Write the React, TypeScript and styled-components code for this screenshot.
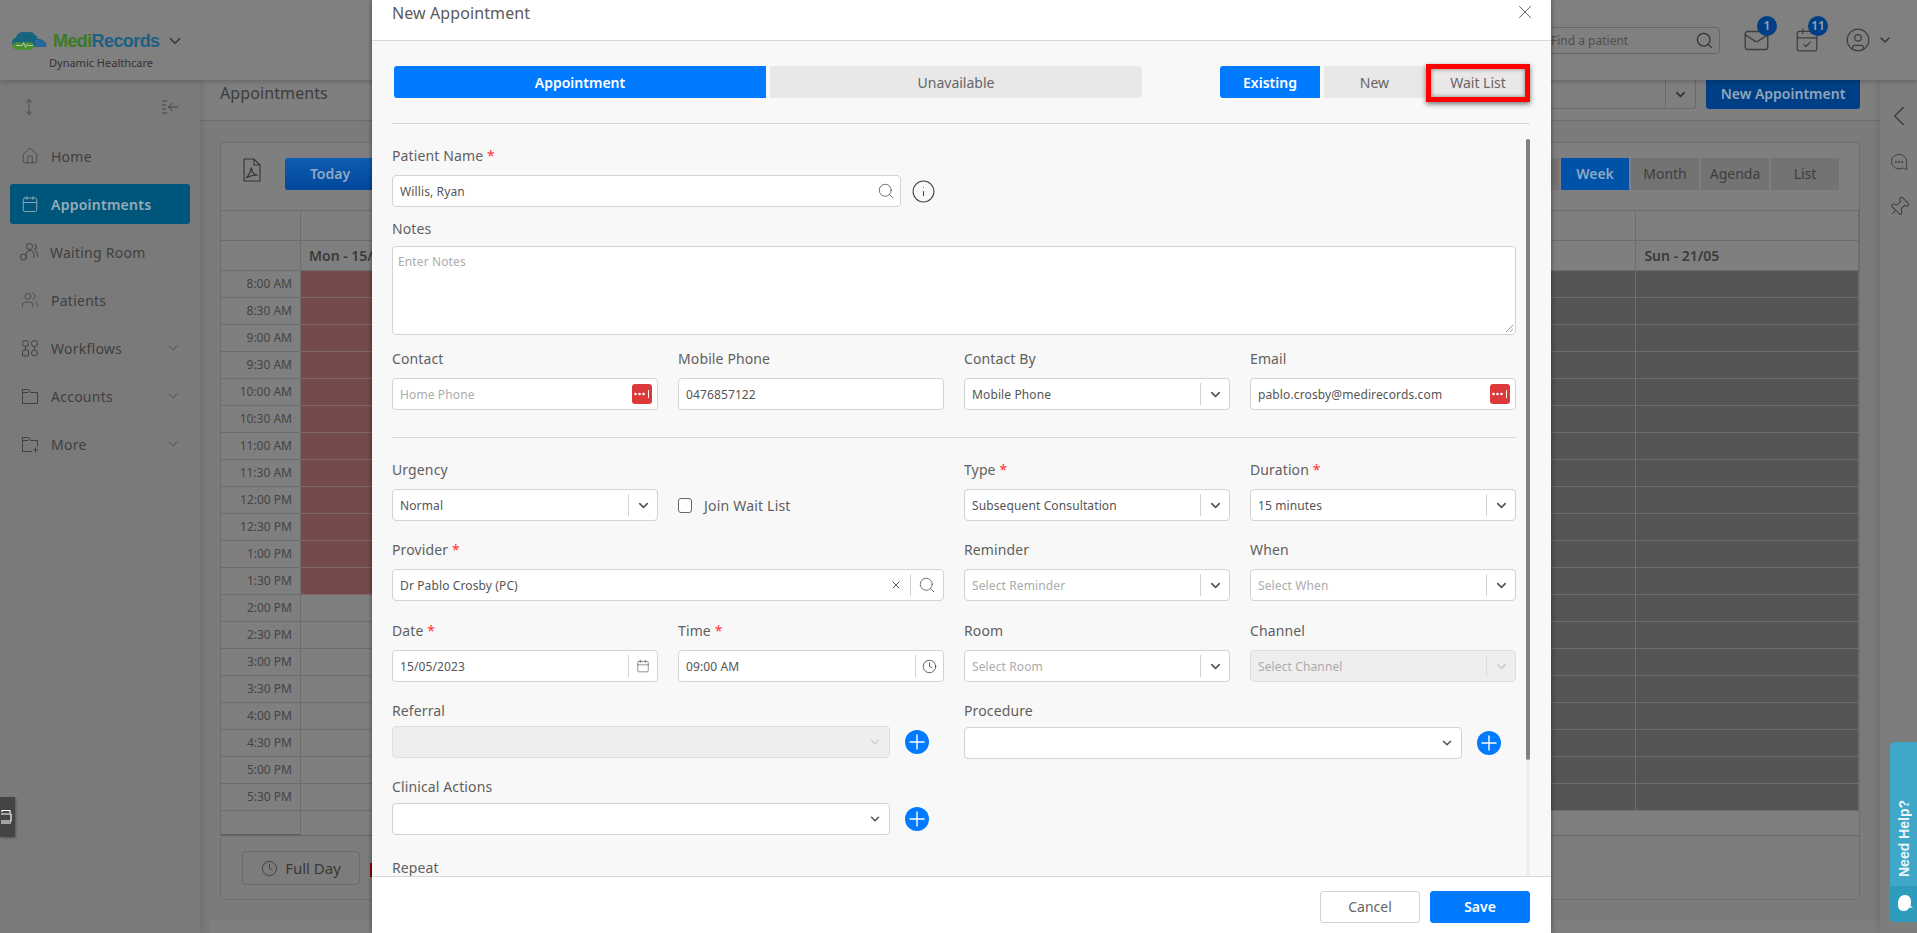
import React from "react";
import styled, { createGlobalStyle } from "styled-components";
import {
  Calendar, CalendarCheck, ChevronDown, ChevronLeft, CircleUser, Clock,
  House, Info, Mail, MoveVertical, Pin, Plus, Search, Users, X,
} from "lucide-react";

const Global = createGlobalStyle`
  html, body { margin: 0; padding: 0; height: 100%; overflow: hidden; }
  body { font-family: "Noto Sans", "Open Sans", sans-serif; background: #7b7b7b; }
  * { box-sizing: border-box; }
`;

const Page = styled.div`
  position: relative; width: 1917px; height: 933px; overflow: hidden;
  display: flex; flex-direction: column;
`;
const TopBar = styled.header`
  height: 80px; flex: none; position: relative; z-index: 2;
  display: flex; align-items: center; background: #808080;
  box-shadow: 0 2px 5px rgba(0,0,0,.18); padding-right: 24px;
`;
const Brand = styled.div`
  width: 200px; height: 80px; flex: none; padding: 29px 0 0 11px; position: relative;
`;
const BrandRow = styled.div` display: flex; align-items: center; gap: 6px; height: 24px; `;
const BrandName = styled.span`
  font: 700 18px/24px "Liberation Sans", Arial, sans-serif; letter-spacing: -.6px; color: #1c5f83;
  & b { color: #3c7a25; font-weight: 700; }
`;
const BrandSub = styled.div`
  font-size: 11px; line-height: 16px; color: #333; margin: 2px 0 0 38px; white-space: nowrap;
`;
const Chevron = styled(ChevronDown)` margin-left: 1px; color: #333; `;
const TopRight = styled.div` margin-left: auto; display: flex; align-items: center; `;
const SearchBox = styled.div`
  width: 240px; height: 27px; border: 1px solid #666; border-radius: 4px; display: flex; align-items: center;
  justify-content: space-between; padding: 0 5px 0 70px; font-size: 12px; color: #4e4e4e; margin-right: 23px;
`;
const IconBadge = styled.div`
  position: relative; width: 26px; height: 26px; margin-right: 25px; color: #3e3e3e;
`;
const Badge = styled.span`
  position: absolute; left: 14px; top: -11px; width: 20px; height: 20px; border-radius: 50%;
  background: #003f86; color: #93a5b8; font-size: 12px; font-weight: 600; line-height: 20px; text-align: center;
`;
const Body = styled.div` flex: 1; display: flex; min-height: 0; `;
const Sidebar = styled.aside`
  width: 200px; flex: none; background: #7a7a7a; padding: 27px 10px 0; box-shadow: 2px 0 6px rgba(0,0,0,.1); z-index: 1;
`;
const SideTools = styled.div`
  display: flex; justify-content: space-between; align-items: center; color: #444; height: 0; padding: 0 11px 0 10px; margin-bottom: 29px;
`;
const SideItem = styled.div<{ $active?: boolean }>`
  height: 40px; margin-bottom: 8px; border-radius: 3px; display: flex; align-items: center; gap: 12px; padding-left: 11px;
  font-size: 14px; letter-spacing: .25px; color: ${p => (p.$active ? "#96adb9" : "#404040")};
  font-weight: ${p => (p.$active ? 600 : 400)};
  background: ${p => (p.$active ? "#00567a" : "transparent")};
  & > svg:last-child:not(:first-child) { margin-left: auto; margin-right: 9px; }
`;
const Main = styled.main` flex: 1; min-width: 0; display: flex; flex-direction: column; `;
const PageHead = styled.div`
  height: 41px; flex: none; display: flex; background: #7f7f7f; border-bottom: 1px solid #6d6d6d; padding: 0 20px;
`;
const PageTitle = styled.h1`
  margin: 0; font-size: 16px; font-weight: 400; line-height: 26px; color: #3c3c3c; letter-spacing: .1px;
`;
const HeadSelect = styled.div`
  margin-left: auto; width: 196px; height: 29px; border: 1px solid #6a6a6a; border-top: 0; border-radius: 0 0 4px 4px;
  display: flex; justify-content: flex-end; align-items: center; color: #333;
`;
const HeadSelectArrow = styled.div`
  width: 30px; height: 100%; border-left: 1px solid #6a6a6a; display: flex; align-items: center; justify-content: center;
`;
const NewBtn = styled.div`
  margin-left: 10px; width: 154px; height: 29px; background: #003f85; color: #8fa6bd; border-radius: 0 0 3px 3px;
  font-size: 14px; font-weight: 600; line-height: 27px; text-align: center;
`;
const Rail = styled.aside`
  width: 37px; flex: none; background: #7d7d7d; box-shadow: -2px 0 6px rgba(0,0,0,.1); display: flex; flex-direction: column;
  align-items: center; padding-top: 19px; color: #3e3e3e;
  & > svg:nth-child(2) { margin-top: 20px; }
  & > svg:nth-child(3) { margin-top: 25px; }
`;
const Card = styled.section`
  margin: 21px 20px 0; height: 758px; flex: none; border: 1px solid #6d6d6d; border-radius: 4px; background: #7f7f7f; display: flex; flex-direction: column; overflow: hidden;
`;
const CalTools = styled.div`
  height: 68px; flex: none; display: flex; align-items: flex-start; padding: 15px 20px 0 22px; border-bottom: 1px solid #6d6d6d; color: #333;
`;
const Today = styled.div`
  width: 90px; height: 32px; margin-left: 24px; border-radius: 3px; background: linear-gradient(#0f5cb3, #00479a);
  color: #90a9c4; font-size: 14px; font-weight: 600; line-height: 32px; text-align: center;
`;
const ViewGroup = styled.div` margin-left: auto; display: flex; gap: 2px; `;
const ViewBtn = styled.div<{ $on?: boolean }>`
  width: 68px; height: 32px; font-size: 14px; line-height: 32px; text-align: center;
  font-weight: ${p => (p.$on ? 600 : 400)};
  background: ${p => (p.$on ? "#0052a8" : "#737373")};
  color: ${p => (p.$on ? "#8fa8c2" : "#3e3e3e")};
`;
const Grid = styled.div`
  display: grid; grid-template-columns: 80px repeat(7, 1fr); grid-template-rows: 30px 30px repeat(20, 27px); flex: none;
`;
const HeadCell = styled.div`
  border-right: 1px solid #6d6d6d; border-bottom: 1px solid #6d6d6d; padding-left: 8px;
  font-size: 14px; font-weight: 600; line-height: 29px; color: #3a3a3a;
`;
const TimeCell = styled.div`
  border-right: 1px solid #6d6d6d; border-bottom: 1px solid #6d6d6d; text-align: right; padding-right: 8px;
  font-size: 12px; line-height: 25px; color: #444;
`;
const SlotCell = styled.div<{ $kind: "busy" | "off" | "free" }>`
  border-right: 1px solid ${p => (p.$kind === "off" ? "#6e6e6e" : "#6d6d6d")};
  border-bottom: 1px solid ${p => (p.$kind === "busy" ? "#806868" : p.$kind === "off" ? "#6e6e6e" : "#6d6d6d")};
  background: ${p => (p.$kind === "busy" ? "#744a4a" : p.$kind === "off" ? "#555555" : "#7f7f7f")};
`;
const GridTail = styled.div`
  height: 24px; flex: none; position: relative; display: grid; grid-template-columns: 80px 1fr;
`;
const TailTime = styled.div` border-right: 1px solid #6d6d6d; border-bottom: 1px solid #606060; `;
const CalFoot = styled.div`
  flex: 1; border-top: 1px solid #666; background: #7c7c7c; display: flex; align-items: flex-start; padding: 15px 21px; gap: 10px;
`;
const FullDay = styled.div`
  width: 118px; height: 34px; border: 1px solid #6a6a6a; border-radius: 4px; display: flex; align-items: center; justify-content: center; gap: 7px;
  font-size: 15px; color: #383838;
`;
const LegendSwatch = styled.span` width: 14px; height: 14px; margin-top: 12px; background: #8b0000; `;
const PageFoot = styled.div` flex: 1; margin-left: 10px; margin-top: 20px; background: #7e7e7e; `;

const DeviceTab = styled.div`
  position: absolute; left: 0; top: 797px; width: 15px; height: 40px; background: #444; color: #fff; z-index: 3;
  box-shadow: 1px 1px 2px rgba(0,0,0,.3); display: flex; align-items: center; justify-content: flex-end;
`;
const Help = styled.div`
  position: absolute; left: 1890px; top: 742px; width: 27px; height: 180px; border-radius: 5px 0 0 5px; overflow: hidden; z-index: 3;
  display: flex; flex-direction: column; background: #3fa8c8;
`;
const HelpText = styled.div`
  flex: 1; display: flex; flex-direction: column; justify-content: flex-end; align-items: center; padding-bottom: 9px;
  font: 700 14px/16px "Liberation Sans", Arial, sans-serif; color: #e9f6fa; 
  & span { writing-mode: vertical-rl; transform: rotate(180deg); white-space: nowrap; }
`;
const HelpIcon = styled.div` height: 36px; flex: none; background: #2e9dbd; padding: 9px 0 0 8px; `;

/* modal */
const Modal = styled.div`
  position: absolute; left: 372px; top: 0; width: 1179px; height: 933px; z-index: 5; background: #fff;
  box-shadow: 0 0 5px rgba(0,0,0,.45); display: flex; flex-direction: column;
`;
const ModalHead = styled.div`
  height: 41px; flex: none; border-bottom: 1px solid #d9d9d9; display: flex; justify-content: space-between; padding: 0 15px 0 20px; color: #555;
`;
const ModalTitle = styled.h2`
  margin: 0; font-size: 16px; line-height: 26px; font-weight: 400; color: #5a5a5a; letter-spacing: .1px;
`;
const CloseBtn = styled(X)` margin-top: 1px; `;
const ModalBody = styled.div`
  height: 836px; flex: none; background: #f8f8f8; border-bottom: 1px solid #d9d9d9; padding: 25px 21px 0 20px; overflow: hidden; display: flex; flex-direction: column;
`;
const TabRow = styled.div`
  height: 32px; flex: none; display: flex; padding-left: 2px; justify-content: space-between;
`;
const TabGroup = styled.div<{ $gap: number }>` display: flex; gap: ${p => p.$gap}px; `;
const Tab = styled.div<{ $on?: boolean; $w: number; $side?: "l" | "r" }>`
  width: ${p => p.$w}px; height: 32px; font-size: 14px; line-height: 33px; text-align: center;
  font-weight: ${p => (p.$on ? 600 : 400)};
  background: ${p => (p.$on ? "#007bff" : "#e9e7e7")};
  color: ${p => (p.$on ? "#fff" : "#666")};
  border-radius: ${p => (p.$side === "l" ? "3px 0 0 3px" : p.$side === "r" ? "0 3px 3px 0" : "0")};
`;
const WaitTab = styled.div`
  width: 104px; height: 38px; margin: -2px 0 -4px -3px; border: 5px solid #f00; background: #e9e7e7; color: #666;
  font-size: 14px; line-height: 28px; text-align: center; box-shadow: 0 2px 5px rgba(0,0,0,.55), inset 0 0 4px rgba(0,0,0,.45);
`;
const Rule = styled.hr<{ $mt: number }>`
  border: 0; height: 1px; flex: none; background: #d9d9d9; margin: ${p => p.$mt}px 0 0;
`;
const ScrollArea = styled.div` flex: 1; min-height: 0; position: relative; `;
const ScrollThumb = styled.div`
  position: absolute; right: 0; top: 15px; width: 4px; height: 621px; background: #808080; border-radius: 2px; 
`;
const ScrollTrack = styled.div` position: absolute; right: 0; top: 15px; bottom: 0; width: 4px; background: #efefef; `;
const Form = styled.div` width: 1124px; padding-top: 22px; `;
const Row = styled.div<{ $mt?: number }>`
  display: grid; grid-template-columns: repeat(4, 1fr); column-gap: 20px; margin-top: ${p => p.$mt ?? 0}px;
`;
const Field = styled.div<{ $span?: number }>` grid-column: span ${p => p.$span ?? 1}; min-width: 0; `;
const Label = styled.div<{ $gap?: number }>`
  height: 20px; line-height: 20px; font-size: 14px; letter-spacing: .12px; color: #5f5f5f; margin-bottom: ${p => p.$gap ?? 9}px;
  & i { color: #f33; font-style: normal; }
`;
const Control = styled.div<{ $off?: boolean; $h?: number; $w?: number }>`
  height: ${p => p.$h ?? 32}px; width: ${p => (p.$w ? p.$w + "px" : "100%")}; background: ${p => (p.$off ? "#eeeeee" : "#fff")};
  border: 1px solid ${p => (p.$off ? "#dedede" : "#d2d2d2")}; border-radius: 4px; display: flex; align-items: center;
  padding-left: 7px; font-size: 12px; letter-spacing: .12px; color: #555; position: relative;
`;
const Value = styled.span<{ $ph?: boolean }>`
  flex: 1; min-width: 0; white-space: nowrap; color: ${p => (p.$ph ? "#acacac" : "#555")};
`;
const Addon = styled.span<{ $line?: boolean; $w?: number; $off?: boolean }>`
  width: ${p => p.$w ?? 29}px; height: 22px; flex: none; display: flex; align-items: center; justify-content: center;
  border-left: ${p => (p.$line ? `1px solid ${p.$off ? "#dedede" : "#d2d2d2"}` : "0")}; color: ${p => (p.$off ? "#cfcfcf" : "#555")};
`;
const InlineRow = styled.div` display: flex; align-items: center; gap: 10px; `;
const Check = styled.span`
  width: 14px; height: 15px; border: 1px solid #666; border-radius: 3px; background: #fff; flex: none;
`;
const CheckField = styled.div`
  display: flex; align-items: center; gap: 12px; height: 32px; margin-top: 29px; font-size: 14px; letter-spacing: .2px; color: #5f5f5f;
`;
const NotesPh = styled.span` position: absolute; left: 5px; top: 6px; font-size: 12px; color: #acacac; `;
const Handle = styled.svg` position: absolute; right: 1px; bottom: 1px; `;
const Foot = styled.div` flex: 1; background: #fff; display: flex; justify-content: flex-end; gap: 10px; padding: 14px 21px 0 0; `;
const FootBtn = styled.div<{ $on?: boolean }>`
  width: 100px; height: 32px; border-radius: 3px; font-size: 14px; line-height: 30px; text-align: center;
  border: 1px solid ${p => (p.$on ? "#007bff" : "#d2d2d2")};
  background: ${p => (p.$on ? "#007bff" : "#fff")};
  color: ${p => (p.$on ? "#fff" : "#666")};
  font-weight: ${p => (p.$on ? 600 : 400)};
`;
const Round = styled.span<{ $ml: number }>`
  width: 24px; height: 24px; flex: none; border-radius: 50%; background: #007bff; color: #fff; display: flex; align-items: center; justify-content: center;
  margin-left: ${p => p.$ml}px;
`;

const Drop = ({ off }: { off?: boolean }) => (
  <Addon $line $off={off}><ChevronDown size={15} strokeWidth={2.6} /></Addon>
);
const Chev = ({ off }: { off?: boolean }) => (
  <Addon $off={off}><ChevronDown size={14} strokeWidth={2.6} /></Addon>
);
const Req = () => <i>*</i>;
const AddBtn = () => <Round $ml={5}><Plus size={26} strokeWidth={1.4} /></Round>;

const DotsBtn = () => (
  <svg width="20" height="20" viewBox="0 0 20 20" style={{ marginRight: 5, flex: "none" }}>
    <rect x="0" y="0" width="20" height="20" rx="3" fill="#dc3a3a" />
    <circle cx="3.5" cy="10" r="1.3" fill="#fff" /><circle cx="7.5" cy="10" r="1.3" fill="#fff" /><circle cx="11.5" cy="10" r="1.3" fill="#fff" />
    <rect x="16" y="6" width="1" height="8" fill="#fff" />
  </svg>
);

const Logo = () => (
  <svg width="36" height="20" viewBox="0 0 36 20">
    <path d="M1 12c0-3 1.500-5 4-5.500C6 2 11 0 15 1.500 18 0 22 1 24 4c1.500.5 2.500 2 2.500 4 3-.5 7 1.500 8.500 4.500 1 2 .5 3.500-1 3.500H5C2 16 1 14 1 12z" fill="#17647f" />
    <path d="M24 9c3-1 8 1 10 3.500 1.500 2 1 3.500 0 3.500H24z" fill="#28689c" />
    <path d="M2.500 12.500c2.500-1.500 6-1.500 9-.5 3-1.500 7-1.500 10 0 2.500 1.500 2.500 5 0 6-3 1.500-13 1.500-16.500.5-4-1-4.500-4.500-2.500-6z" fill="#4b8f30" />
    <path d="M5 14.500h6l1.500-3 2 5 1.500-3 1 1h5" fill="none" stroke="#c9d8c0" strokeWidth=".8" />
  </svg>
);

const SortLines = () => (
  <svg width="18" height="18" viewBox="0 0 18 18" fill="none" stroke="currentColor" strokeWidth="1">
    <path d="M1 3h5M1 7h4M1 11h4M1 15h5M17 9H7.500M11.500 5l-4 4 4 4" />
  </svg>
);
const WaitIcon = () => (
  <svg width="18" height="20" viewBox="0 0 18 20" fill="none" stroke="currentColor" strokeWidth="1" style={{ marginLeft: -1 }}>
    <circle cx="9.500" cy="4.500" r="3" /><path d="M14 2.500a2.500 2.500 0 0 1 0 5M6 16v-3c0-3 2-4.500 4-4.500s4 1 4 4.500v3M15 9c2 .5 2.500 2 2.500 4v2" />
    <circle cx="3.500" cy="15" r="3" />
  </svg>
);
const FlowIcon = () => (
  <svg width="18" height="18" viewBox="0 0 18 18" fill="none" stroke="currentColor" strokeWidth="1">
    <circle cx="4.500" cy="4.500" r="3" /><circle cx="13.500" cy="4.500" r="3" /><rect x="1.500" y="11" width="6" height="6" rx="1" /><circle cx="13.500" cy="14" r="3" />
    <path d="M4.500 7.500V11M13.500 7.500V11" />
  </svg>
);
const FolderIcon = () => (
  <svg width="18" height="18" viewBox="0 0 18 18" fill="none" stroke="currentColor" strokeWidth="1">
    <path d="M1.500 2.500h6l2 3h7v11h-15zM1.500 5.500h6" />
  </svg>
);
const FolderPlusIcon = () => (
  <svg width="18" height="18" viewBox="0 0 18 18" fill="none" stroke="currentColor" strokeWidth="1">
    <path d="M11 16.500H1.500v-14h6l2 3h7v6M1.500 5.500h6M14.500 12.500v5M12 15h5" />
  </svg>
);
const PdfIcon = () => (
  <svg width="18" height="24" viewBox="0 0 18 24" fill="none" stroke="currentColor" strokeWidth="1.1">
    <path d="M1 1h10l6 6v16H1zM11 1v6h6" />
    <path d="M3 20c3-2 4-5 5-9 0-3 1 0 1 2 1 3 3 4 6 4-3 0-7 0-12 3z" />
  </svg>
);
const DeviceIcon = () => (
  <svg width="14" height="16" viewBox="0 0 14 16" fill="none" stroke="currentColor" strokeWidth="1.200">
    <path d="M1 3V1.500h8V4M-3 5h13v7H-3zM-3 14h13" />
  </svg>
);
const ChatIcon = () => (
  <svg width="18" height="18" viewBox="0 0 18 18" fill="none" stroke="currentColor" strokeWidth="1">
    <path d="M9 1.500c4.500 0 7.500 3 7.500 7 0 2 0 5 .5 8-2-.5-3.500-1-4.500-1.500-1 .5-2.300.7-3.500.7-4.500 0-7.500-3-7.500-7.200s3-7 7.500-7z" />
    <circle cx="5.800" cy="9" r=".6" fill="currentColor" /><circle cx="9" cy="9" r=".6" fill="currentColor" /><circle cx="12.200" cy="9" r=".6" fill="currentColor" />
  </svg>
);

const times = ["8:00 AM","8:30 AM","9:00 AM","9:30 AM","10:00 AM","10:30 AM","11:00 AM","11:30 AM","12:00 PM","12:30 PM","1:00 PM","1:30 PM","2:00 PM","2:30 PM","3:00 PM","3:30 PM","4:00 PM","4:30 PM","5:00 PM","5:30 PM"];
const dayHead = ["Mon - 15/05", "", "", "", "", "", "Sun - 21/05"];
const nav: { label: string; icon: React.ReactNode; more?: boolean; active?: boolean }[] = [
  { label: "Home", icon: <House size={18} strokeWidth={1} /> },
  { label: "Appointments", icon: <Calendar size={18} strokeWidth={1.2} />, active: true },
  { label: "Waiting Room", icon: <WaitIcon /> },
  { label: "Patients", icon: <Users size={18} strokeWidth={1} /> },
  { label: "Workflows", icon: <FlowIcon />, more: true },
  { label: "Accounts", icon: <FolderIcon />, more: true },
  { label: "More", icon: <FolderPlusIcon />, more: true },
];

export default function App() {
  return (
    <Page>
      <Global />
      <TopBar>
        <Brand>
          <BrandRow>
            <Logo />
            <BrandName><b>Medi</b>Records</BrandName>
            <Chevron size={18} strokeWidth={2} />
          </BrandRow>
          <BrandSub>Dynamic Healthcare</BrandSub>
        </Brand>
        <TopRight>
          <SearchBox>Find a patient<Search size={19} strokeWidth={1.6} color="#333" /></SearchBox>
          <IconBadge><Mail size={27} strokeWidth={1.2} /><Badge>1</Badge></IconBadge>
          <IconBadge><CalendarCheck size={26} strokeWidth={1.1} /><Badge>11</Badge></IconBadge>
          <IconBadge style={{ marginRight: 6 }}><CircleUser size={26} strokeWidth={1.1} /></IconBadge>
          <ChevronDown size={16} strokeWidth={2} color="#333" />
        </TopRight>
      </TopBar>
      <Body>
        <Sidebar>
          <SideTools><MoveVertical size={18} strokeWidth={1.1} /><SortLines /></SideTools>
          {nav.map(n => (
            <SideItem key={n.label} $active={n.active}>
              {n.icon}
              <span>{n.label}</span>
              {n.more && <ChevronDown size={16} strokeWidth={1.1} />}
            </SideItem>
          ))}
        </Sidebar>
        <Main>
          <PageHead>
            <PageTitle>Appointments</PageTitle>
            <HeadSelect><HeadSelectArrow><ChevronDown size={15} strokeWidth={2.6} /></HeadSelectArrow></HeadSelect>
            <NewBtn>New Appointment</NewBtn>
          </PageHead>
          <Card>
            <CalTools>
              <PdfIcon />
              <Today>Today</Today>
              <ViewGroup>
                <ViewBtn />
                <ViewBtn $on>Week</ViewBtn>
                <ViewBtn>Month</ViewBtn>
                <ViewBtn>Agenda</ViewBtn>
                <ViewBtn>List</ViewBtn>
              </ViewGroup>
            </CalTools>
            <Grid>
              <HeadCell />
              {dayHead.map((_, i) => <HeadCell key={i} />)}
              <HeadCell />
              {dayHead.map((d, i) => <HeadCell key={i}>{d}</HeadCell>)}
              {times.map((t, r) => (
                <React.Fragment key={t}>
                  <TimeCell>{t}</TimeCell>
                  {dayHead.map((_, c) => (
                    <SlotCell key={c} $kind={c >= 5 ? "off" : r < 12 ? "busy" : "free"} />
                  ))}
                </React.Fragment>
              ))}
            </Grid>
            <GridTail><TailTime /></GridTail>
            <CalFoot>
              <FullDay><Clock size={17} strokeWidth={1.2} />Full Day</FullDay>
              <LegendSwatch />
            </CalFoot>
          </Card>
          <PageFoot />
        </Main>
        <Rail>
          <ChevronLeft size={34} strokeWidth={1} />
          <ChatIcon />
          <Pin size={22} strokeWidth={1.1} style={{ transform: "rotate(45deg)" }} />
        </Rail>
      </Body>

      <DeviceTab><DeviceIcon /></DeviceTab>
      <Help>
        <HelpText><span>Need Help?</span></HelpText>
        <HelpIcon>
          <svg width="15" height="17" viewBox="0 0 15 17"><path d="M7 0c4 0 6 3 6 7 0 1.500 0 3-.5 4l2.500 2-3.500-.5C10 15 8 16 6 16c-4 0-6-2-6-7 0-6 3-9 7-9z" fill="#fff" /></svg>
        </HelpIcon>
      </Help>

      <Modal>
        <ModalHead>
          <ModalTitle>New Appointment</ModalTitle>
          <CloseBtn size={22} strokeWidth={1} />
        </ModalHead>
        <ModalBody>
          <TabRow>
            <TabGroup $gap={4}>
              <Tab $on $w={372} $side="l">Appointment</Tab>
              <Tab $w={372} $side="r">Unavailable</Tab>
            </TabGroup>
            <TabGroup $gap={4}>
              <Tab $on $w={100} $side="l">Existing</Tab>
              <Tab $w={101}>New</Tab>
              <WaitTab>Wait List</WaitTab>
            </TabGroup>
          </TabRow>
          <Rule $mt={25} />
          <ScrollArea>
            <ScrollTrack />
            <ScrollThumb />
            <Form>
              <Row>
                <Field $span={2}>
                  <Label>Patient Name <Req /></Label>
                  <InlineRow>
                    <Control $w={509}>
                      <Value>Willis, Ryan</Value>
                      <Addon><Search size={18} strokeWidth={1.1} /></Addon>
                    </Control>
                    <Info size={25} strokeWidth={1} color="#444" />
                  </InlineRow>
                </Field>
              </Row>
              <Row $mt={12}>
                <Field $span={4}>
                  <Label $gap={7}>Notes</Label>
                  <Control $h={89}>
                    <NotesPh>Enter Notes</NotesPh>
                    <Handle width="9" height="9" viewBox="0 0 9 9" stroke="#777" strokeWidth=".8"><path d="M1 8l7-7M5 8l3-3" /></Handle>
                  </Control>
                </Field>
              </Row>
              <Row $mt={14}>
                <Field>
                  <Label>Contact</Label>
                  <Control><Value $ph>Home Phone</Value><DotsBtn /></Control>
                </Field>
                <Field>
                  <Label>Mobile Phone</Label>
                  <Control><Value>0476857122</Value></Control>
                </Field>
                <Field>
                  <Label>Contact By</Label>
                  <Control><Value>Mobile Phone</Value><Drop /></Control>
                </Field>
                <Field>
                  <Label>Email</Label>
                  <Control><Value>pablo.crosby@medirecords.com</Value><DotsBtn /></Control>
                </Field>
              </Row>
              <Rule $mt={27} />
              <Row $mt={22}>
                <Field>
                  <Label>Urgency</Label>
                  <Control><Value>Normal</Value><Drop /></Control>
                </Field>
                <Field>
                  <CheckField><Check />Join Wait List</CheckField>
                </Field>
                <Field>
                  <Label>Type <Req /></Label>
                  <Control><Value>Subsequent Consultation</Value><Drop /></Control>
                </Field>
                <Field>
                  <Label>Duration <Req /></Label>
                  <Control><Value>15 minutes</Value><Drop /></Control>
                </Field>
              </Row>
              <Row $mt={19}>
                <Field $span={2}>
                  <Label>Provider <Req /></Label>
                  <Control>
                    <Value>Dr Pablo Crosby (PC)</Value>
                    <Addon><X size={12} strokeWidth={2} /></Addon>
                    <Addon $line $w={33}><Search size={18} strokeWidth={1.1} /></Addon>
                  </Control>
                </Field>
                <Field>
                  <Label>Reminder</Label>
                  <Control><Value $ph>Select Reminder</Value><Drop /></Control>
                </Field>
                <Field>
                  <Label>When</Label>
                  <Control><Value $ph>Select When</Value><Drop /></Control>
                </Field>
              </Row>
              <Row $mt={20}>
                <Field>
                  <Label>Date <Req /></Label>
                  <Control><Value>15/05/2023</Value><Addon $line><Calendar size={14} strokeWidth={1.1} /></Addon></Control>
                </Field>
                <Field>
                  <Label>Time <Req /></Label>
                  <Control><Value>09:00 AM</Value><Addon $line $w={28}><Clock size={15} strokeWidth={1.1} color="#222" /></Addon></Control>
                </Field>
                <Field>
                  <Label>Room</Label>
                  <Control><Value $ph>Select Room</Value><Drop /></Control>
                </Field>
                <Field>
                  <Label>Channel</Label>
                  <Control $off><Value $ph>Select Channel</Value><Drop off /></Control>
                </Field>
              </Row>
              <Row $mt={19}>
                <Field $span={2}>
                  <Label $gap={5}>Referral</Label>
                  <InlineRow>
                    <Control $off $w={498}><Value /><Chev off /></Control>
                    <AddBtn />
                  </InlineRow>
                </Field>
                <Field $span={2}>
                  <Label $gap={6}>Procedure</Label>
                  <InlineRow>
                    <Control $w={498}><Value /><Chev /></Control>
                    <AddBtn />
                  </InlineRow>
                </Field>
              </Row>
              <Row $mt={18}>
                <Field $span={2}>
                  <Label $gap={6}>Clinical Actions</Label>
                  <InlineRow>
                    <Control $w={498}><Value /><Chev /></Control>
                    <AddBtn />
                  </InlineRow>
                </Field>
              </Row>
              <Row $mt={23}>
                <Field><Label>Repeat</Label></Field>
              </Row>
            </Form>
          </ScrollArea>
        </ModalBody>
        <Foot>
          <FootBtn>Cancel</FootBtn>
          <FootBtn $on>Save</FootBtn>
        </Foot>
      </Modal>
    </Page>
  );
}
